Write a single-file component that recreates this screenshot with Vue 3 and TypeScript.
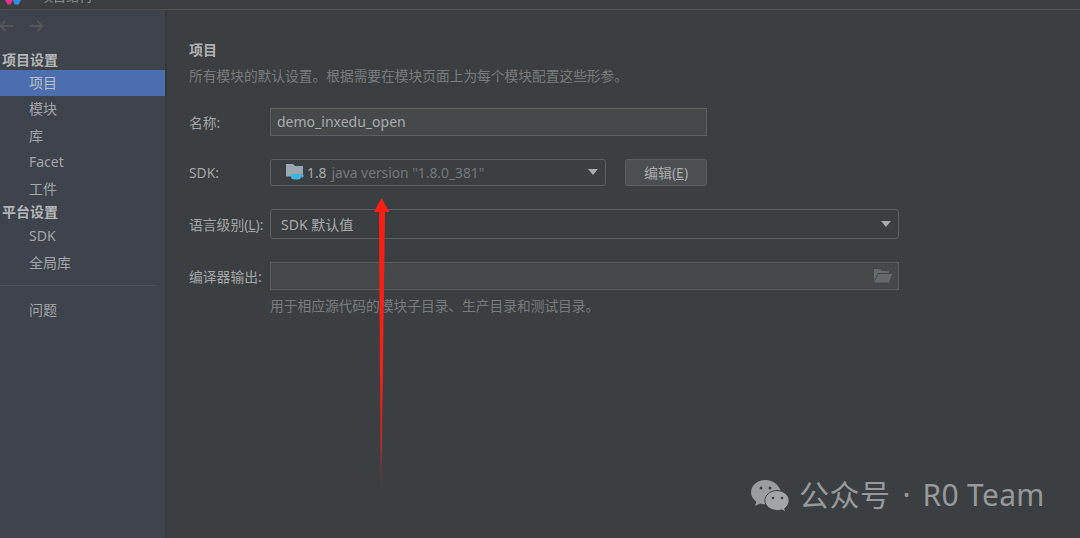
<script setup lang="ts">
const topItems = ['模块', '库', 'Facet', '工件']
const platformItems = ['SDK', '全局库']
</script>

<template>
  <div class="window">
    <header class="titlebar">
      <svg class="logo" width="19" height="6" viewBox="0 0 19 6">
        <path d="M0 0h8L5.500 4.500H2.500z" fill="#ee2f86" />
        <path d="M8 0h8l-2.500 4.500h-4z" fill="#2f8fe8" />
      </svg>
      <span class="title">项目结构</span>
    </header>
    <div class="body">
      <aside class="sidebar">
        <div class="nav-arrows">
          <svg width="16" height="12" viewBox="0 0 16 12" fill="none" stroke="#55585a" stroke-width="1.800">
            <path d="M14 6H1.500M6.500 1 1.500 6l5 5" />
          </svg>
          <svg width="16" height="12" viewBox="0 0 16 12" fill="none" stroke="#55585a" stroke-width="1.800">
            <path d="M1 6h12.500M8.500 1l5 5-5 5" />
          </svg>
        </div>
        <div class="group first">项目设置</div>
        <div class="item selected">项目</div>
        <div v-for="i in topItems" :key="i" class="item">{{ i }}</div>
        <div class="group second">平台设置</div>
        <div v-for="i in platformItems" :key="i" class="item">{{ i }}</div>
        <div class="divider"></div>
        <div class="item">问题</div>
      </aside>
      <main class="content">
        <h1 class="heading">项目</h1>
        <p class="desc">所有模块的默认设置。根据需要在模块页面上为每个模块配置这些形参。</p>
        <div class="row row-name">
          <label class="label">名称:</label>
          <div class="field short"><span class="name-text">demo_inxedu_open</span></div>
        </div>
        <div class="row row-sdk">
          <label class="label">SDK:</label>
          <div class="select sdk">
            <svg class="sdk-icon" width="18" height="17" viewBox="0 0 18 17">
              <path d="M0 0h7l2 2h8v10.500H0z" fill="#9aa7b0" />
              <path d="M5 10h10v2.500a3 3 0 0 1-3 3H8a3 3 0 0 1-3-3z" fill="#3fb5e2" />
              <path d="M15 11h2v2h-2" fill="none" stroke="#3fb5e2" />
            </svg>
            <span class="ver">1.8</span>
            <span class="muted">java version "1.8.0_381"</span>
            <i class="caret"></i>
          </div>
          <button class="btn">编辑(<u>E</u>)</button>
        </div>
        <div class="row row-lang">
          <label class="label">语言级别(<u>L</u>):</label>
          <div class="select wide">
            <span class="ver">SDK 默认值</span>
            <i class="caret"></i>
          </div>
        </div>
        <div class="row row-out">
          <label class="label">编译器输出:</label>
          <div class="field output">
            <svg width="18" height="14" viewBox="0 0 18 14">
              <path d="M0 0h6l2 2h7v2H4L0 12z" fill="#646a6c" />
              <path d="M4.500 5H18l-3 8.500H0z" fill="#646a6c" />
            </svg>
          </div>
        </div>
        <p class="hint">用于相应源代码的模块子目录、生产目录和测试目录。</p>
      </main>
    </div>
    <svg class="arrow" width="24" height="292" viewBox="0 0 24 292">
      <defs>
        <linearGradient id="shaft" gradientUnits="userSpaceOnUse" x1="0" y1="0" x2="0" y2="292">
          <stop offset="0" stop-color="#fb1e14" />
          <stop offset="0.6" stop-color="#f5201a" />
          <stop offset="0.85" stop-color="#c8262a" />
          <stop offset="1" stop-color="#a03034" stop-opacity="0.1" />
        </linearGradient>
      </defs>
      <path d="M12.500 0 20.500 14H16L12.300 292H11.700L10 14H5z" fill="url(#shaft)" />
    </svg>
    <div class="watermark">
      <svg width="41" height="33" viewBox="0 0 41 33">
        <path d="M16 1C7.700 1 1 6.500 1 13.300c0 3.800 2.100 7.100 5.300 9.400L5 27l5-2.500c1.800.5 3.800.8 6 .8l2-.1C25 24 31 18 31 12.500 29 6 23 1 16 1z" fill="#9a9c9d" />
        <path d="M27.500 11.500C20.500 11.500 14.900 16 14.900 21.500s5.600 10 12.600 10c1.600 0 3-.2 4.400-.6l3.800 2-1-3.400c2.700-1.900 4.400-4.800 4.400-8 0-5.500-5.600-10-12.600-10z" fill="#a3a5a6" stroke="#3c3f41" stroke-width="1" />
        <circle cx="11" cy="9" r="1.500" fill="#3c3f41" />
        <circle cx="20" cy="9" r="1.500" fill="#3c3f41" />
        <circle cx="23" cy="19" r="1.300" fill="#3c3f41" />
        <circle cx="32" cy="19" r="1.300" fill="#3c3f41" />
      </svg>
      <span class="wm-cn">公众号</span>
      <span class="wm-dot">·</span>
      <span class="wm-en">R0 Team</span>
    </div>
  </div>
</template>

<style>
html, body { margin: 0; background: #3c3f41; }
</style>

<style scoped>
.window {
  position: relative;
  width: 1080px;
  height: 538px;
  overflow: hidden;
  background: #3c3f41;
  color: #a9abad;
  font-family: "Noto Sans", "Noto Sans CJK SC", sans-serif;
  font-size: 14px;
}
.titlebar {
  height: 9px;
  border-bottom: 1px solid #515354;
  display: flex;
  align-items: flex-start;
  overflow: hidden;
  padding-left: 5px;
  gap: 16px;
}
.title { font-size: 13px; color: #8d8f90; line-height: 14px; margin-top: -11px; }
.body { display: flex; height: 528px; }
.sidebar {
  width: 165px;
  flex: none;
  background: #3e434c;
  box-shadow: 1px 0 3px rgba(0, 0, 0, .18);
}
.nav-arrows { display: flex; gap: 14px; height: 33px; padding: 10px 0 0 0; box-sizing: border-box; margin-left: -1px; }
.group { font-weight: 700; padding-left: 2px; color: #b4b6b7; font-size: 14px; }
.group.first { margin-top: 8px; margin-bottom: 1px; line-height: 18px; height: 18px; }
.group.second { line-height: 18px; margin-top: 1px; height: 20.400px; }
.item { height: 26.400px; line-height: 26px; padding-left: 29px; color: #a3a6a8; }
.selected { background: #4b6eaf; color: #bbbfc4; }
.divider { height: 1px; background: #4e5156; margin: 9px 8px 11px 0; }
.content { flex: 1; padding: 30px 0 0 24px; }
.heading { margin: 0; font-size: 14px; font-weight: 700; line-height: 20px; color: #b0b2b3; }
.desc { margin: 5px 0 0; line-height: 22px; color: #787b7d; font-size: 13.720px; }
.row { display: flex; align-items: center; }
.label { width: 81px; flex: none; color: #a3a5a7; font-size: 13.800px; }
.row-name { margin-top: 21px; height: 28px; }
.row-sdk { margin-top: 22px; height: 28px; }
.row-lang { margin-top: 23px; height: 30px; }
.row-out { margin-top: 23px; height: 28px; }
.field, .select {
  box-sizing: border-box;
  border: 1px solid #5d6062;
  height: 100%;
  display: flex;
  align-items: center;
  color: #a9abad;
}
.field { background: #45494a; }
.short { width: 437px; padding-left: 6px; }
.name-text { margin-top: -2px; }
.select { border-radius: 3px; position: relative; padding-left: 10px; }
.sdk { width: 336px; height: 27px; padding-left: 15px; font-size: 13.800px; }
.sdk-icon { margin-right: 3px; }
.wide { width: 629px; }
.ver { color: #a9abad; }
.muted { color: #74777a; margin-left: 5px; }
.caret {
  position: absolute;
  right: 7px;
  top: 50%;
  margin-top: -3px;
  border: 5px solid transparent;
  border-top: 6px solid #a9abad;
  border-bottom: 0;
}
.btn {
  margin-left: 19px;
  width: 82px;
  height: 27px;
  padding: 0;
  box-sizing: border-box;
  background: #4b4f51;
  border: 1px solid #5c5f61;
  border-radius: 3px;
  color: #a9abad;
  font: inherit;
}
.output { width: 629px; justify-content: flex-end; padding-right: 6px; }
.hint { margin: 5px 0 0 81px; line-height: 22px; color: #787b7d; font-size: 13.720px; }
.arrow { position: absolute; left: 369px; top: 198px; }
.watermark {
  position: absolute;
  left: 750px;
  top: 477px;
  display: flex;
  align-items: center;
  color: #97999a;
  font-size: 30px;
  line-height: 36px;
  white-space: nowrap;
}
.wm-cn { margin-left: 8px; letter-spacing: .5px; }
.wm-dot { margin-left: 12px; }
.wm-en { margin-left: 12px; letter-spacing: .3px; }
</style>
